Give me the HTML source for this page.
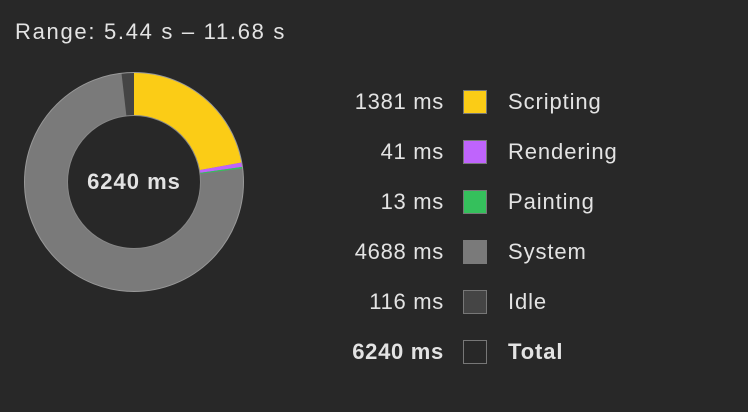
<!DOCTYPE html>
<html><head><style>
body{margin:0;width:748px;height:412px;background:#282828;font-family:"Liberation Sans",Arial,sans-serif;color:#e3e3e3;position:relative;overflow:hidden}
.t{position:absolute;left:15px;top:19px;font-size:22px;letter-spacing:1.7px;white-space:nowrap}
.row{position:absolute;left:0;height:26px;font-size:22px;line-height:26px;letter-spacing:0.9px}
.v{position:absolute;left:303px;width:141px;text-align:right;letter-spacing:0.7px}
.sw{position:absolute;left:463px;top:1px;width:22px;height:22px;border:1.5px solid #777}
.l{position:absolute;left:508px;white-space:nowrap}
.c{position:absolute;left:34px;top:170px;width:200px;text-align:center;font-size:22px;letter-spacing:1px;font-weight:bold;line-height:24px}
</style></head><body>
<div class="t">Range: 5.44 s – 11.68 s</div>
<svg style="position:absolute;left:0;top:0" width="270" height="300">
<g transform="translate(134,182) rotate(-90)">
<circle r="88" fill="none" stroke="#7a7a7a" stroke-width="43"/>
<circle r="88" fill="none" stroke="#fbcc16" stroke-width="43" stroke-dasharray="122.4 1000"/>
<circle r="88" fill="none" stroke="#bf64fc" stroke-width="43" stroke-dasharray="0 122.4 3.6 1000"/>
<circle r="88" fill="none" stroke="#35c05c" stroke-width="43" stroke-dasharray="0 126 1.2 1000"/>
<circle r="88" fill="none" stroke="#444" stroke-width="43" stroke-dasharray="0 542.6 10.3 1000"/>
<circle r="109.5" fill="none" stroke="#999" stroke-width="1"/>
<circle r="66.5" fill="none" stroke="#888" stroke-width="1"/>
</g></svg>
<div class="c">6240 ms</div>
<div class="row" style="top:89px"><span class="v">1381 ms</span><span class="sw" style="background:#fbcc16"></span><span class="l">Scripting</span></div>
<div class="row" style="top:139px"><span class="v">41 ms</span><span class="sw" style="background:#bf64fc"></span><span class="l">Rendering</span></div>
<div class="row" style="top:189px"><span class="v">13 ms</span><span class="sw" style="background:#35c05c"></span><span class="l">Painting</span></div>
<div class="row" style="top:239px"><span class="v">4688 ms</span><span class="sw" style="background:#7a7a7a;border-color:#7a7a7a"></span><span class="l">System</span></div>
<div class="row" style="top:289px"><span class="v">116 ms</span><span class="sw" style="background:#454545"></span><span class="l">Idle</span></div>
<div class="row" style="top:339px;font-weight:bold"><span class="v">6240 ms</span><span class="sw" style="background:#282828"></span><span class="l">Total</span></div>
</body></html>
